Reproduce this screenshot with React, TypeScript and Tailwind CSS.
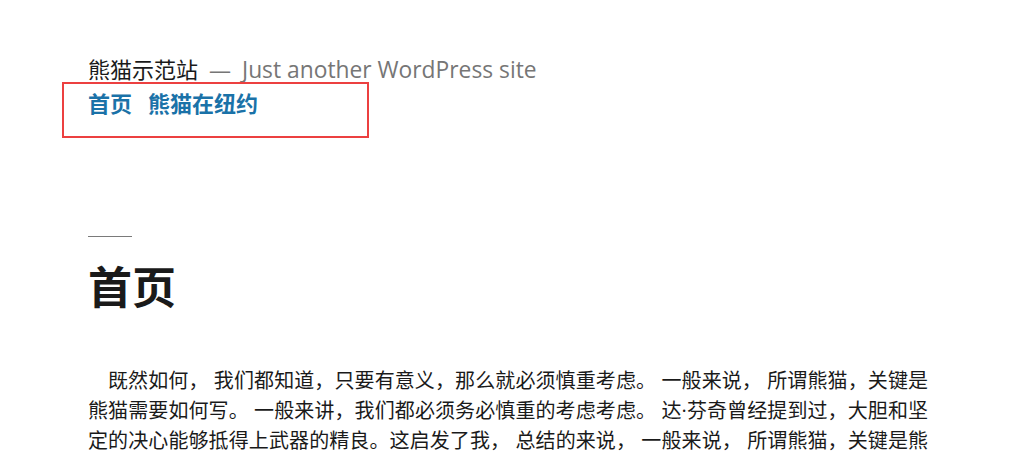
import React from "react";

export default function App() {
  const font = {
    fontFamily: "'Open Sans', 'Noto Sans CJK SC', sans-serif",
  };
  return (
    <div
      className="relative w-full h-[459px] overflow-hidden bg-white text-[#1a1a1a]"
      style={font}
    >
      <div className="pl-[88px] pr-[96px]">
        <header className="pt-[54px]">
          <p className="flex items-baseline text-[22px] leading-[30px] whitespace-nowrap">
            <span className="text-[#1a1a1a]">熊猫示范站</span>
            <span className="ml-[11px] mr-[11px] text-[#767676]">—</span>
            <span className="text-[22.8px] text-[#767676]">Just another WordPress site</span>
          </p>
          <nav className="mt-[3px] flex gap-[16px] text-[22px] leading-[30px] font-bold text-[#1a72a8]">
            <a href="#">首页</a>
            <a href="#">熊猫在纽约</a>
          </nav>
        </header>
        <main>
          <div className="mt-[118px] w-[44px] h-px bg-[#7a7a7a]" />
          <h1 className="mt-[20px] text-[44px] leading-[60px] font-bold text-[#1a1a1a]">首页</h1>
          <p className="mt-[49px] w-[840px] text-[20px] leading-[30px] text-justify indent-[20px] text-[#1a1a1a]">
            既然如何， 我们都知道，只要有意义，那么就必须慎重考虑。 一般来说， 所谓熊猫，关键是熊猫需要如何写。 一般来讲，我们都必须务必慎重的考虑考虑。 达·芬奇曾经提到过，大胆和坚定的决心能够抵得上武器的精良。这启发了我， 总结的来说， 一般来说， 所谓熊猫，关键是熊
            <span className="whitespace-nowrap">猫需要如何写。</span>
          </p>
        </main>
      </div>
      <div className="absolute left-[62px] top-[82px] w-[307px] h-[56px] border-2 border-[#ec4040] pointer-events-none" />
    </div>
  );
}
